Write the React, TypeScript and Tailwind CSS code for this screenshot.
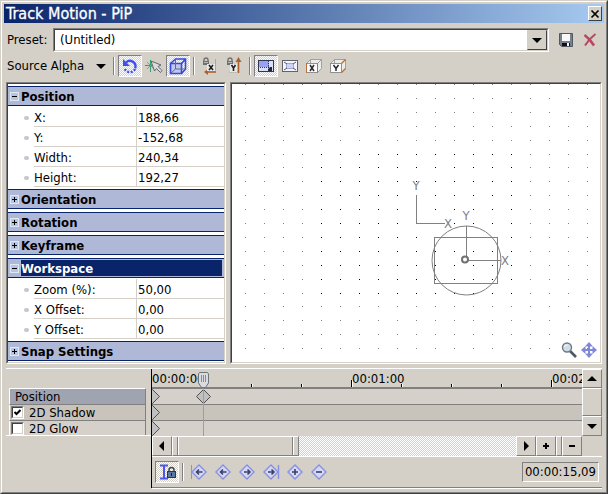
import React, { useState } from 'react';
import clsx from 'clsx';

const hatch = 'bg-[repeating-conic-gradient(#ffffff_0_25%,#d4d0c8_0_50%)] bg-[length:2px_2px]';
const raised = 'border border-t-white border-l-white border-r-[#808080] border-b-[#808080] bg-[#d4d0c8]';

interface Property {
  label: string;
  value: string;
}

interface Section {
  title: string;
  selected?: boolean;
  properties?: Property[];
}

const sections: Section[] = [
  {
    title: 'Position',
    properties: [
      { label: 'X:', value: '188,66' },
      { label: 'Y:', value: '-152,68' },
      { label: 'Width:', value: '240,34' },
      { label: 'Height:', value: '192,27' },
    ],
  },
  { title: 'Orientation' },
  { title: 'Rotation' },
  { title: 'Keyframe' },
  {
    title: 'Workspace',
    selected: true,
    properties: [
      { label: 'Zoom (%):', value: '50,00' },
      { label: 'X Offset:', value: '0,00' },
      { label: 'Y Offset:', value: '0,00' },
    ],
  },
  { title: 'Snap Settings' },
];

/* ---------- Small building blocks ---------- */

const Sunken: React.FC<{ className?: string; children: React.ReactNode }> = ({ className, children }) => (
  <div className={clsx('border border-t-[#808080] border-l-[#808080] border-r-white border-b-white', className)}>
    <div className="flex h-full w-full border border-t-[#404040] border-l-[#404040] border-r-[#d4d0c8] border-b-[#d4d0c8] bg-white">
      {children}
    </div>
  </div>
);

const Separator = () => (
  <div className="mx-[3px] h-[18px] w-[2px] shrink-0 border-l border-r border-l-[#808080] border-r-white" />
);

interface ToolButtonProps {
  label: string;
  pressed?: boolean;
  children: React.ReactNode;
}

const ToolButton: React.FC<ToolButtonProps> = ({ label, pressed, children }) => (
  <button
    aria-label={label}
    aria-pressed={pressed}
    className={clsx(
      'flex h-[22px] w-6 shrink-0 items-center justify-center border',
      pressed
        ? 'border-t-[#808080] border-l-[#808080] border-r-white border-b-white ' + hatch
        : 'border-transparent'
    )}
  >
    {children}
  </button>
);

const Icon: React.FC<{ children: React.ReactNode; size?: number }> = ({ children, size = 18 }) => (
  <svg width={size} height={size} viewBox={`0 0 ${size} ${size}`} fill="none" className="shrink-0" aria-hidden="true">
    {children}
  </svg>
);

const arrows = {
  up: '0,7 5,2 10,7',
  down: '0,3 10,3 5,8',
  left: '7,0 2,5 7,10',
  right: '3,0 8,5 3,10',
};

const Arrow: React.FC<{ direction: keyof typeof arrows }> = ({ direction }) => (
  <Icon size={10}>
    <polygon points={arrows[direction]} fill="#000" />
  </Icon>
);

/* ---------- Toolbar icons ---------- */

const RotateIcon = () => (
  <Icon>
    <path d="M5 5.500a5.600 5.600 0 0 1 9.200 5.800" stroke="#4050e8" strokeWidth="2.400" />
    <path d="M14 12a5.600 5.600 0 0 1-10.600-1.500" stroke="#4050e8" strokeWidth="2.400" strokeDasharray="2 1.500" />
    <path d="M2 2v7h7z" fill="#4050e8" />
  </Icon>
);

const SnapIcon = () => (
  <Icon>
    <path d="M5.500 3v12M0 8.500h11" stroke="#30a070" />
    <path d="M2 5l7 7M9 5l-7 7" stroke="#70a8a0" />
    <path d="M6 4l10 4-3 1.500 4 4-1.500 2-4-4-2 2.500z" fill="#dcdcdc" stroke="#606870" />
  </Icon>
);

const CubeIcon = () => (
  <Icon>
    <path d="M1.500 6.500h11v10h-11z" fill="#c0c8f0" stroke="#3848d8" strokeWidth="1.600" />
    <path d="M1.500 6.500l5-4.500h10v10l-4 4.500M12.500 6.500l4-4.500" stroke="#3848d8" strokeWidth="1.600" />
    <path d="M6.500 2v10h10M6.500 12l-5 4.500" stroke="#606890" />
  </Icon>
);

const Padlock = () => (
  <>
    <path d="M3 5V3a2 2 0 0 1 4 0v2" stroke="#707070" strokeWidth="1.400" />
    <rect x="2" y="4" width="6" height="4" fill="#707070" />
    <path d="M3 5.500h4" stroke="#b8b8b8" />
  </>
);

const LockXIcon = () => (
  <Icon>
    <Padlock />
    <path d="M14.500 2v11l-3 3" stroke="#a8a8a8" />
    <path d="M15 15H6" stroke="#b06030" strokeWidth="1.600" />
    <path d="M3 15l4-3v6z" fill="#b06030" />
    <rect x="6" y="7" width="8" height="7" fill="#e8e8e8" />
    <path d="M8 8l4 5M12 8l-4 5" stroke="#202020" strokeWidth="1.600" />
  </Icon>
);

const LockYIcon = () => (
  <Icon>
    <Padlock />
    <path d="M4 15h8l2-2" stroke="#a8a8a8" />
    <path d="M13.500 16V4" stroke="#b06030" strokeWidth="1.600" />
    <path d="M13.500 0l3 5h-6z" fill="#b06030" />
    <rect x="5" y="7" width="7" height="8" fill="#e8e8e8" />
    <path d="M6.500 8L8.500 11L10.500 8M8.500 11v3" stroke="#202020" strokeWidth="1.600" />
  </Icon>
);

const EditSizeIcon = () => (
  <Icon>
    <rect x="1.500" y="3.500" width="15" height="11" fill="#dce0f4" stroke="#303850" />
    <rect x="2" y="4" width="10" height="6" fill="#98a0f0" />
    <path d="M3 10.500h9M11.500 4v6" stroke="#303850" strokeDasharray="1 1" />
    <path d="M11 9l2 2v-1h2v4h-4v-2h1l-1-1z" fill="#202848" />
  </Icon>
);

const AspectIcon = () => (
  <Icon>
    <rect x="1.500" y="3.500" width="15" height="11" fill="#f4f4fc" stroke="#606468" />
    <rect x="5.500" y="6.500" width="7" height="5" fill="#d0d4f4" stroke="#a0a8d0" />
    <path d="M3 5l3 2M15 5l-3 2M3 13l3-2M15 13l-3-2" stroke="#505870" />
  </Icon>
);

const ScaleIcon: React.FC<{ axis: 'X' | 'Y' }> = ({ axis }) => (
  <Icon>
    <path d="M1.500 6.500l4-4h11v9l-4 4" fill="#ecece8" stroke="#a0a0a0" />
    <path d="M12.500 6.500l4-4M5.500 2.500v4" stroke="#a0a0a0" />
    <rect x="1.500" y="6.500" width="11" height="9" fill="#fcfcfc" stroke="#909090" />
    {axis === 'X' ? (
      <>
        <path d="M1.500 6v10M12.500 6v10" stroke="#b87040" />
        <path d="M5 8l4 6M9 8l-4 6" stroke="#282828" strokeWidth="1.500" />
      </>
    ) : (
      <>
        <path d="M12.500 6.500l4-4M12.500 15.500l4-4" stroke="#b87040" strokeWidth="1.400" />
        <path d="M4.500 8L7 11.500L9.500 8M7 11v3" stroke="#282828" strokeWidth="1.500" />
      </>
    )}
  </Icon>
);

const SaveIcon = () => (
  <Icon size={14}>
    <path d="M0.500 0.500h13v13h-11l-2-2z" fill="#78808c" stroke="#505864" />
    <rect x="3" y="1" width="8" height="7" fill="#f8f8f8" />
    <rect x="3" y="10" width="8" height="3" fill="#101010" />
    <rect x="8" y="10" width="2" height="3" fill="#f8f8f8" />
  </Icon>
);

const DeleteIcon = () => (
  <Icon size={14}>
    <path d="M1.500 2Q7 6 11 12.500" stroke="#b84860" strokeWidth="2.600" />
    <path d="M12.500 1Q6 6 2 12.500" stroke="#b84860" strokeWidth="2" />
  </Icon>
);

const CursorLockIcon = () => (
  <Icon>
    <path d="M2 2.500h8M2 15.500h8M6 2v14" stroke="#4858f0" strokeWidth="2" />
    <path d="M11 9V7a2.500 2.500 0 0 1 5 0v2" stroke="#404858" strokeWidth="1.500" />
    <rect x="9.500" y="8.500" width="8" height="6" fill="#5878a0" stroke="#283850" />
    <path d="M13.500 10v3" stroke="#182030" />
  </Icon>
);

type KeyframeKind = 'first' | 'previous' | 'next' | 'last' | 'add' | 'remove';

const keyframeGlyphs: Record<KeyframeKind, string> = {
  first: 'M6.500 9h6M9 6.500L6.500 9L9 11.500',
  previous: 'M6.500 9h6M9 6.500L6.500 9L9 11.500',
  next: 'M6 9h6M9.500 6.500L12 9L9.500 11.500',
  last: 'M6 9h6M9.500 6.500L12 9L9.500 11.500',
  add: 'M6 9h6M9 6v6',
  remove: 'M6 9h6',
};

const KeyframeIcon: React.FC<{ kind: KeyframeKind }> = ({ kind }) => (
  <Icon>
    <path d="M9 2l7 7-7 7-7-7z" fill="#d4d8f8" stroke="#8890e0" strokeWidth="1.400" />
    {kind === 'first' && <path d="M1.500 2v14" stroke="#8890e0" />}
    {kind === 'last' && <path d="M16.500 2v14" stroke="#8890e0" strokeWidth="1.400" />}
    <path d={keyframeGlyphs[kind]} stroke="#404060" strokeWidth="1.600" />
  </Icon>
);

/* ---------- Panels ---------- */

const PropertySection: React.FC<{ section: Section }> = ({ section }) => {
  const open = !!section.properties;
  return (
    <section className="pb-[2px]">
      <button
        aria-expanded={open}
        className="flex h-5 w-full items-center border-y border-[#0a246a] bg-[#b0b8d8] pr-[2px] pl-[2px] text-left font-bold"
      >
        <svg width="9" height="9" className="mr-[2px] shrink-0" shapeRendering="crispEdges" aria-hidden="true">
          <rect x="0.500" y="0.500" width="8" height="8" fill="#b8c4e0" stroke="#dce8f4" />
          <path d={open ? 'M2 4.500h5' : 'M2 4.500h5M4.500 2v5'} stroke="#000" />
        </svg>
        <span className={clsx('h-4 flex-1 leading-[18px]', section.selected && 'bg-[#0a246a] text-white')}>
          {section.title}
        </span>
      </button>
      <div className="pt-px">
        {section.properties?.map(({ label, value }) => (
          <label key={label} className="flex h-5 items-stretch">
            <span className="flex w-[26px] shrink-0 items-center justify-end pt-px pr-[5px]">
              <span className="h-1 w-[5px] rounded-full bg-[#c4c8d0]" />
            </span>
            <span className="w-[102px] shrink-0 border-b border-[#d4d0c8] pt-px">
              <span className="block leading-[19px]">{label}</span>
            </span>
            <input
              className="min-w-0 flex-1 border-b border-l border-[#d4d0c8] bg-white pt-[2px] pl-px outline-none"
              defaultValue={value}
            />
          </label>
        ))}
      </div>
    </section>
  );
};

const columns = Array.from({ length: 19 }, (_, i) => i - 9);
const rows = Array.from({ length: 20 }, (_, i) => i - 10);

const WorkspaceCanvas = () => (
  <div className="relative min-w-0 flex-1 overflow-hidden">
    <svg className="absolute inset-0 h-full w-full" aria-label="Workspace">
      {/* Grid dots, darker inside the project frame */}
      <g shapeRendering="crispEdges">
        {rows.map((r) =>
          columns.map((c) => (
            <rect
              key={`${r}:${c}`}
              x={184 + c * 19}
              y={Math.floor(139.5 + r * 13.9)}
              width="1"
              height="1"
              fill={Math.abs(r) <= 5 && Math.abs(c) <= 5 ? '#000' : '#808080'}
            />
          ))
        )}
        <path d="M184.500 111v28.500h28" fill="none" stroke="#808080" />
        <rect x="202.500" y="153.500" width="63" height="46" fill="none" stroke="#808080" />
        <path d="M234.500 142v34.500h34" fill="none" stroke="#808080" />
      </g>
      <circle cx="234.500" cy="176.500" r="34.500" fill="none" stroke="#808080" />
      <circle cx="233" cy="175.500" r="3" fill="#fff" stroke="#707070" strokeWidth="2" />
      <g fill="#808080" textAnchor="middle">
        <text x="184" y="106">Y</text>
        <text x="216" y="144">X</text>
        <text x="234" y="136">Y</text>
        <text x="273" y="181">X</text>
      </g>
    </svg>
    <div className="absolute right-[2px] bottom-[3px] flex gap-[2px]">
      <button aria-label="Zoom">
        <Icon>
          <path d="M10 10l6 6" stroke="#505864" strokeWidth="2.600" />
          <circle cx="7" cy="6.500" r="4.500" fill="#d0dce8" stroke="#707880" strokeWidth="1.400" />
          <path d="M4.500 6a2.500 2.500 0 0 1 3-2" stroke="#fff" />
        </Icon>
      </button>
      <button aria-label="Pan">
        <Icon>
          <path d="M9 4v10M4 9h10" stroke="#8088d8" strokeWidth="2" />
          <path d="M9 1l4 4.500h-8zM9 17l4-4.500h-8zM1 9l4.500-4v8zM17 9l-4.500-4v8z" fill="#8088d8" />
        </Icon>
      </button>
    </div>
  </div>
);

const ticks = [50, 100, 150, 200, 250, 300, 350, 400];

const Ruler = () => (
  <svg className="block h-5 w-full border-b-2 border-[#808080]" aria-label="Time ruler">
    {ticks.map((t) => {
      const height = t % 200 === 0 ? 7 : 3;
      return (
        <g key={t} shapeRendering="crispEdges">
          <rect x={t - 1} y={18 - height} width="1" height={height} fill="#000" />
          <rect x={t} y={18 - height} width="1" height={height} fill="#fff" />
        </g>
      );
    })}
    <text x="0" y="14">00:00:00</text>
    <text x="200" y="14">00:01:00</text>
    <text x="400" y="14">00:02:00</text>
  </svg>
);

const trackRows = [
  { name: 'Position', keys: [0, 51], shade: 'bg-[#d6d0ca]' },
  { name: '2D Shadow', keys: [0], shade: 'bg-[#c8c4bc]' },
  { name: '2D Glow', keys: [0], shade: 'bg-[#d6d0ca]' },
];

const Timeline = () => (
  <div className="relative min-w-0 flex-1 overflow-hidden">
    <Ruler />
    {trackRows.map(({ name, keys, shade }, i) => (
      <div key={name} className={clsx(shade, i < 2 ? 'h-4 border-b border-[#808080]' : 'h-[15px]')}>
        <svg className="block h-[15px] w-full" aria-label={`${name} keyframes`}>
          {keys.map((x) => (
            <path key={x} d={`M${x + 0.5} 0.500l7 7-7 7-7-7z`} fill="#c0c0c0" stroke="#505050" />
          ))}
        </svg>
      </div>
    ))}
    {/* Playhead */}
    <svg className="absolute top-[3px] left-[46px]" width="12" height="64" aria-hidden="true">
      <path d="M5.500 16v48" stroke="#d09060" shapeRendering="crispEdges" />
      <path d="M0.500 2l1-1.500h8l1 1.500v9l-3 4.500h-4l-3-4.500z" fill="#d8dce0" stroke="#707478" />
      <path d="M3.500 3v7M5.500 3v7M7.500 3v7" stroke="#888c90" shapeRendering="crispEdges" />
    </svg>
  </div>
);

const TrackList = () => {
  const [shadow, setShadow] = useState(true);
  const [glow, setGlow] = useState(false);
  const effects = [
    { name: '2D Shadow', checked: shadow, onChange: setShadow, shade: 'h-4 border-b border-b-[#808080] bg-[#c8c4bc]' },
    { name: '2D Glow', checked: glow, onChange: setGlow, shade: 'h-[14px] bg-[#d6d0ca]' },
  ];

  return (
    <div className="w-[145px] shrink-0 pt-[19px]">
      <div className="border-b border-white pr-[5px] pl-[3px]">
        <div className="flex h-[17px] items-center border border-t-white border-r-[#808080] border-b-[#808080] border-l-white bg-[#a0a4b0] pl-[5px]">
          Position
        </div>
        {effects.map(({ name, checked, onChange, shade }) => (
          <label
            key={name}
            className={clsx('flex items-center gap-[5px] overflow-hidden border-r border-l border-r-[#808080] border-l-white pl-px', shade)}
          >
            <input
              type="checkbox"
              className="sr-only"
              checked={checked}
              onChange={(e) => onChange(e.target.checked)}
            />
            <span className="flex h-[13px] w-[13px] shrink-0 border border-t-[#808080] border-r-white border-b-white border-l-[#808080]">
              <span className="flex h-full w-full items-center justify-center border border-t-[#404040] border-r-[#d4d0c8] border-b-[#d4d0c8] border-l-[#404040] bg-white">
                {checked && (
                  <svg width="9" height="9" aria-hidden="true">
                    <path d="M1.500 4L3.500 6L7.500 2" fill="none" stroke="#000" strokeWidth="2" />
                  </svg>
                )}
              </span>
            </span>
            <span className="pt-px leading-4">{name}</span>
          </label>
        ))}
      </div>
    </div>
  );
};

const App: React.FC = () => {
  return (
    <div className='w-full bg-[#d4d0c8] font-["DejaVu_Sans_Condensed","DejaVu_Sans",sans-serif] text-[13px] leading-4 text-black'>
      <div className="border border-t-[#d4d0c8] border-r-[#404040] border-b-[#404040] border-l-[#d4d0c8]">
        <div className="border border-t-white border-r-[#808080] border-b-[#808080] border-l-white p-[2px] pb-1">
          {/* Title bar */}
          <header className="flex h-[19px] items-center justify-between bg-linear-to-r/srgb from-[#0a246a] to-[#a6caf0] pr-[2px] pl-[2px]">
            <h1 className="text-[16px] leading-[19px] text-white [-webkit-text-stroke:0.3px_white]">Track Motion - PiP</h1>
            <button
              aria-label="Close"
              className="flex h-[15px] w-[14px] items-center justify-center border border-t-white border-r-[#404040] border-b-[#404040] border-l-white bg-[#d4d0c8]"
            >
              <svg width="10" height="10" aria-hidden="true">
                <path d="M1.500 1.500l7 7M8.500 1.500l-7 7" stroke="#000" strokeWidth="1.700" />
              </svg>
            </button>
          </header>

          <div className="px-[2px]">
            {/* Preset */}
            <div className="flex items-center pt-[5px] pl-px">
              <label htmlFor="preset" className="w-[46px] shrink-0">
                Preset:
              </label>
              <Sunken className="h-6 min-w-0 flex-1">
                <select id="preset" className="min-w-0 flex-1 appearance-none bg-white pl-[5px] outline-none">
                  <option>(Untitled)</option>
                </select>
                <span className="pointer-events-none flex w-5 shrink-0 items-center justify-center border border-t-[#d4d0c8] border-r-[#404040] border-b-[#404040] border-l-[#d4d0c8] bg-[#d4d0c8]">
                  <Arrow direction="down" />
                </span>
              </Sunken>
              <button aria-label="Save preset" className="ml-[10px]">
                <SaveIcon />
              </button>
              <button aria-label="Delete preset" className="mr-[5px] ml-[10px]">
                <DeleteIcon />
              </button>
            </div>

            {/* Toolbar */}
            <div className="flex items-center pt-[3px] pb-[5px] pl-px">
              <button className="flex w-[103px] shrink-0 items-center justify-between pr-[3px] whitespace-nowrap">
                <span>
                  Source Al<u>p</u>ha
                </span>
                <Icon size={12}>
                  <polygon points="1,4 11,4 6,9" fill="#000" />
                </Icon>
              </button>
              <Separator />
              <ToolButton label="Enable rotation" pressed>
                <RotateIcon />
              </ToolButton>
              <ToolButton label="Enable snapping">
                <SnapIcon />
              </ToolButton>
              <ToolButton label="Edit in object space" pressed>
                <CubeIcon />
              </ToolButton>
              <Separator />
              <ToolButton label="Prevent movement (X)">
                <LockXIcon />
              </ToolButton>
              <ToolButton label="Prevent movement (Y)">
                <LockYIcon />
              </ToolButton>
              <Separator />
              <ToolButton label="Lock aspect ratio" pressed>
                <EditSizeIcon />
              </ToolButton>
              <ToolButton label="Scale about center">
                <AspectIcon />
              </ToolButton>
              <ToolButton label="Prevent scaling (X)">
                <ScaleIcon axis="X" />
              </ToolButton>
              <ToolButton label="Prevent scaling (Y)">
                <ScaleIcon axis="Y" />
              </ToolButton>
            </div>

            {/* Properties and workspace */}
            <main className="flex gap-1">
              <Sunken className="w-[220px] shrink-0">
                <div className="w-full pt-[2px] [&>section:last-child]:pb-0">
                  {sections.map((section) => (
                    <PropertySection key={section.title} section={section} />
                  ))}
                </div>
              </Sunken>
              <Sunken className="min-w-0 flex-1">
                <WorkspaceCanvas />
              </Sunken>
            </main>

            {/* Keyframe timeline */}
            <footer className="mt-1 flex border-t border-white">
              <TrackList />
              <div className="min-w-0 flex-1 border-l border-black">
                <div className="flex">
                  <Timeline />
                  <div className="flex w-5 shrink-0 flex-col">
                    <button aria-label="Scroll up" className={clsx('flex h-[19px] items-center justify-center', raised)}>
                      <Arrow direction="up" />
                    </button>
                    <div className={clsx('flex-1', raised)} />
                    <button aria-label="Scroll down" className={clsx('flex h-5 items-center justify-center', raised)}>
                      <Arrow direction="down" />
                    </button>
                  </div>
                </div>

                <div className="flex h-5 pr-5">
                  <button aria-label="Scroll left" className={clsx('flex w-5 items-center justify-center', raised)}>
                    <Arrow direction="left" />
                  </button>
                  <div className={clsx('flex w-[127px] justify-between px-1', raised)}>
                    <span className="w-[2px] border-r border-l border-r-white border-l-[#808080]" />
                    <span className="w-[2px] border-r border-l border-r-white border-l-[#808080]" />
                  </div>
                  <div className={clsx('flex-1', hatch)} />
                  <button aria-label="Scroll right" className={clsx('flex w-5 items-center justify-center', raised)}>
                    <Arrow direction="right" />
                  </button>
                  <button aria-label="Zoom in time" className={clsx('flex w-5 items-center justify-center', raised)}>
                    <Icon size={8}>
                      <path d="M1 4h6M4 1v6" stroke="#000" strokeWidth="2" />
                    </Icon>
                  </button>
                  <div className={clsx('w-[6px]', raised)} />
                  <button aria-label="Zoom out time" className={clsx('flex w-5 items-center justify-center', raised)}>
                    <Icon size={8}>
                      <path d="M1 4h6" stroke="#000" strokeWidth="2" />
                    </Icon>
                  </button>
                </div>

                <div className="flex h-8 items-center border-t border-b border-t-white border-b-[#808080] pr-[3px] pl-[3px] shadow-[0_1px_0_#ffffff]">
                  <ToolButton label="Sync cursor" pressed>
                    <CursorLockIcon />
                  </ToolButton>
                  <Separator />
                  <ToolButton label="First keyframe">
                    <KeyframeIcon kind="first" />
                  </ToolButton>
                  <ToolButton label="Previous keyframe">
                    <KeyframeIcon kind="previous" />
                  </ToolButton>
                  <ToolButton label="Next keyframe">
                    <KeyframeIcon kind="next" />
                  </ToolButton>
                  <ToolButton label="Last keyframe">
                    <KeyframeIcon kind="last" />
                  </ToolButton>
                  <ToolButton label="Create keyframe">
                    <KeyframeIcon kind="add" />
                  </ToolButton>
                  <ToolButton label="Delete keyframe">
                    <KeyframeIcon kind="remove" />
                  </ToolButton>
                  <output className="ml-auto flex h-5 items-center border border-t-[#808080] border-r-white border-b-white border-l-[#808080] px-[2px]">
                    00:00:15,09
                  </output>
                </div>
              </div>
            </footer>
          </div>
        </div>
      </div>
    </div>
  );
};

export default App;
